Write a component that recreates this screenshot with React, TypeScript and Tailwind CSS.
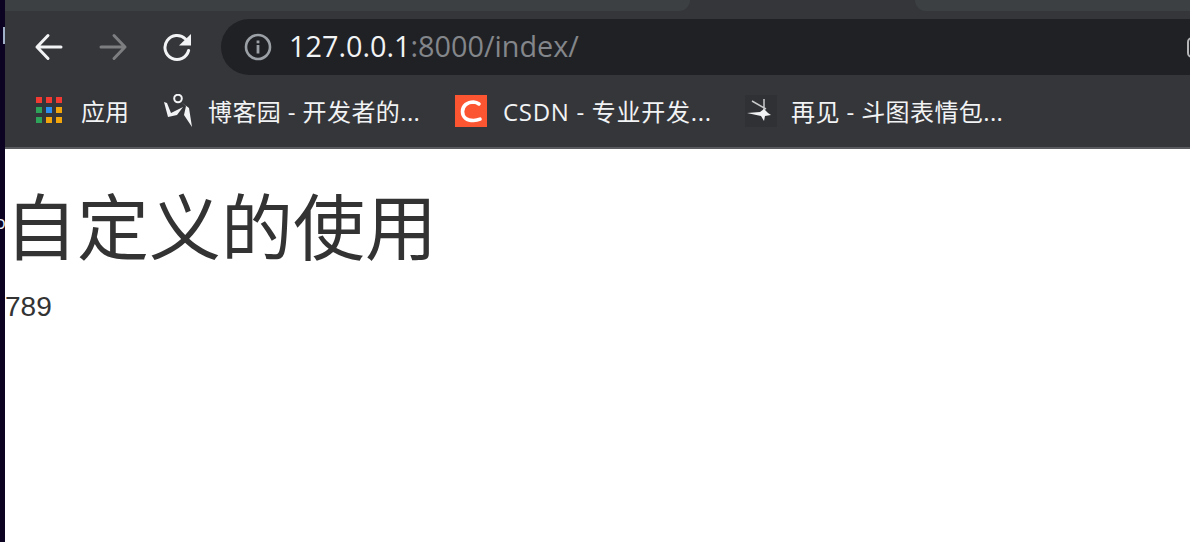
const uiFont = { fontFamily: '"Open Sans", "Noto Sans CJK SC", sans-serif' };

const Back = () => (
  <svg width="30" height="30" viewBox="0 0 30 30" fill="none" stroke="#f1f3f4" strokeWidth="3" strokeLinecap="round" strokeLinejoin="round">
    <path d="M27 15H3M14 3.500L3 15l11 11.500" />
  </svg>
);

const Forward = () => (
  <svg width="30" height="30" viewBox="0 0 30 30" fill="none" stroke="#7c7e80" strokeWidth="3" strokeLinecap="round" strokeLinejoin="round">
    <path d="M3 15h24M16 3.500L27 15 16 26.500" />
  </svg>
);

const Reload = () => (
  <svg width="30" height="30" viewBox="0 0 30 30" fill="none">
    <path d="M26.600 18.500A12 12 0 1 1 23.500 7" stroke="#f1f3f4" strokeWidth="3" strokeLinecap="round" />
    <path d="M29 2v11.600H17z" fill="#f1f3f4" />
  </svg>
);

const Info = () => (
  <svg width="28" height="28" viewBox="0 0 28 28" fill="none">
    <circle cx="14" cy="14" r="12" stroke="#9aa0a6" strokeWidth="2.600" />
    <rect x="12.600" y="12" width="2.800" height="8.500" fill="#9aa0a6" />
    <rect x="12.600" y="7.500" width="2.800" height="2.800" fill="#9aa0a6" />
  </svg>
);

const AppsGrid = () => (
  <svg width="28" height="28" viewBox="0 0 28 28">
    <rect x="0" y="0" width="6" height="6" fill="#f23a32" />
    <rect x="10" y="0" width="6" height="6" fill="#f23a32" />
    <rect x="20" y="0" width="6" height="6" fill="#f23a32" />
    <rect x="0" y="10" width="6" height="6" fill="#2ea35a" />
    <rect x="10" y="10" width="6" height="6" fill="#2a8ff0" />
    <rect x="20" y="10" width="6" height="6" fill="#f2a60c" />
    <rect x="0" y="20" width="6" height="6" fill="#2ea35a" />
    <rect x="10" y="20" width="6" height="6" fill="#f2a60c" />
    <rect x="20" y="20" width="6" height="6" fill="#f2a60c" />
  </svg>
);

const CnblogsIcon = () => (
  <svg width="30" height="34" viewBox="0 0 30 34" fill="none">
    <circle cx="14" cy="4.500" r="3.800" stroke="#f1f3f4" strokeWidth="2" />
    <path d="M0 8l3 1 4 10 12-6-6 8-9 2z" fill="#f1f3f4" />
    <path d="M17 8l8 6 3 19-8-12 2-9z" fill="#f1f3f4" />
  </svg>
);

const CsdnIcon = () => (
  <svg width="32" height="32" viewBox="0 0 32 32">
    <rect width="32" height="32" fill="#fc5531" />
    <path d="M24 9a10 10 0 0 0-5.500-2C12.500 7 7.500 10.500 7.500 16.500s4.500 9 11 9c2.300 0 4.500-.4 6.500-1.300" fill="none" stroke="#ffffff" strokeWidth="3.600" strokeLinecap="round" />
  </svg>
);

const ByeIcon = () => (
  <svg width="32" height="32" viewBox="0 0 32 32" fill="none">
    <rect width="32" height="32" fill="#303134" />
    <path d="M7 6l14 8M19 4v16" stroke="#c9cacb" strokeWidth="1.500" />
    <path d="M2 18l13-1 4-3 4 4 3 2-6 1-1 5-3-5z" fill="#f1f3f4" />
  </svg>
);

const Bookmark = ({ icon, label, className, textClass }: { icon: React.ReactNode; label: string; className: string; textClass: string }) => (
  <div className={`flex items-center shrink-0 ${className}`}>
    {icon}
    <span className={`text-[24px] leading-[32px] pt-[2px] text-[#f1f3f4] whitespace-nowrap ${textClass}`}>{label}</span>
  </div>
);

export default function App() {
  return (
    <div className="flex h-[542px] w-[1190px] overflow-hidden bg-white">
      {/* desktop sliver on the far left */}
      <div className="w-[5px] shrink-0 bg-[#0b0321] overflow-hidden">
        <div className="ml-[3px] mt-[27px] h-[17px] w-[2px] bg-[#9fb0c8]" />
        <div className="ml-[-5px] mt-[168px] text-[18px] leading-[20px] text-[#e8eef8]" style={uiFont}>o</div>
      </div>

      <div className="flex-1 min-w-0 overflow-hidden">
        {/* tab strip */}
        <div className="flex h-[19px] bg-[#35363a]">
          <div className="w-[685px] h-[11px] shrink-0 bg-[#3c4043] rounded-br-[14px]" />
          <div className="w-[225px] shrink-0" />
          <div className="flex-1 h-[11px] bg-[#3c4043] rounded-bl-[14px]" />
        </div>

        {/* toolbar */}
        <div className="flex items-center h-[56px] bg-[#35363a]" style={uiFont}>
          <div className="flex items-center gap-[34px] w-[216px] pl-[29px] shrink-0">
            <Back />
            <Forward />
            <Reload />
          </div>
          <div className="flex items-center w-[1000px] h-[56px] shrink-0 rounded-l-[28px] bg-[#202124] pl-[23px]">
            <Info />
            <div className="ml-[17px] text-[28.800px] leading-[56px] whitespace-nowrap -mt-[2px]">
              <span className="text-[#f1f3f4]">127.0.0.1</span>
              <span className="text-[#83868a]">:8000/index/</span>
            </div>
            <div className="ml-auto mr-[14px] h-[21px] w-[20px] rounded-[5px] border-2 border-[#b4b6b8]" />
          </div>
        </div>

        {/* bookmarks */}
        <div className="flex items-center h-[74px] bg-[#35363a] border-b-2 border-[#5a5b5e] pl-[31px]" style={uiFont}>
          <Bookmark icon={<span className="mr-[17px] flex"><AppsGrid /></span>} label="应用" className="w-[128px]" textClass="" />
          <Bookmark icon={<span className="mr-[14px] flex"><CnblogsIcon /></span>} label="博客园 - 开发者的..." className="w-[291px]" textClass="tracking-[0.4px]" />
          <Bookmark icon={<span className="mr-[16px] flex"><CsdnIcon /></span>} label="CSDN - 专业开发..." className="w-[290px]" textClass="tracking-[0.7px]" />
          <Bookmark icon={<span className="mr-[14px] flex"><ByeIcon /></span>} label="再见 - 斗图表情包..." className="w-[270px]" textClass="tracking-[0.4px]" />
        </div>

        {/* page */}
        <div className="text-[#333333]">
          <h1 className="pt-[40px] text-[72px] leading-[80px] whitespace-nowrap" style={{ fontFamily: '"Liberation Sans", "Noto Sans CJK SC", sans-serif' }}>
            自定义的使用
          </h1>
          <p className="mt-[18px] text-[28px] leading-[40px]" style={{ fontFamily: '"Liberation Sans", sans-serif' }}>789</p>
        </div>
      </div>
    </div>
  );
}
